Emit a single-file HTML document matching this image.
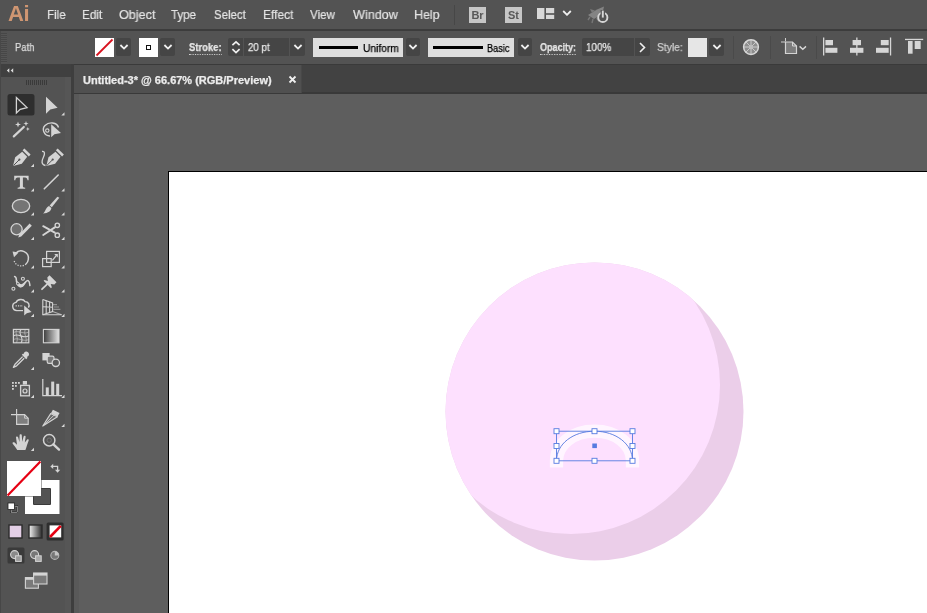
<!DOCTYPE html>
<html>
<head>
<meta charset="utf-8">
<style>
*{box-sizing:border-box;margin:0;padding:0}
html,body{width:927px;height:613px;overflow:hidden;background:#5e5e5e;font-family:"Liberation Sans",sans-serif;}
#app{position:relative;width:927px;height:613px;overflow:hidden;background:#5e5e5e}
.abs{position:absolute}
#menubar{left:0;top:0;width:927px;height:29px;background:#535353}
#menuline{left:0;top:29px;width:927px;height:2px;background:#3c3c3c}
#ctrl{left:0;top:31px;width:927px;height:33px;background:#535353}
#tabbar{left:72px;top:64px;width:855px;height:30px;background:#424242;border-top:1px solid #3a3a3a;border-bottom:2px solid #393939}
#tab{left:74px;top:65px;width:228px;height:28px;background:#505050;border-right:1px solid #484848}
#tools{left:0;top:64px;width:72px;height:549px;background:#535353}
#toolhead{left:0;top:64px;width:72px;height:13px;background:#404040}
#toolborder{left:71px;top:64px;width:3px;height:549px;background:#3e3e3e}
#strip{left:74px;top:94px;width:5px;height:519px;background:#595959}
#strip2{left:65px;top:77px;width:6px;height:536px;background:#565656}

.mi{-webkit-text-stroke:0.2px currentColor;will-change:transform;position:absolute;top:7px;font-size:13px;line-height:16px;color:#e4e4e4;white-space:nowrap;transform-origin:0 0}
.ct{-webkit-text-stroke:0.25px currentColor;will-change:transform;position:absolute;font-size:11px;line-height:14px;color:#dcdcdc;white-space:nowrap;transform-origin:0 0}
.dd{position:absolute;top:38px;height:18px;background:#454545;border-radius:2px}
.dd svg{position:absolute;left:50%;top:50%;margin-left:-5px;margin-top:-3px}
.fld{position:absolute;top:38px;height:18px;background:#454545}
.lt{position:absolute;top:38px;height:19px;background:#dedede}
.ul{border-bottom:1px dotted #cfcfcf}
.appbtn{will-change:transform;position:absolute;top:7px;width:17px;height:16px;background:#c6c6c6;color:#585858;font-size:11px;font-weight:bold;line-height:16px;text-align:center}
#artboard{left:168px;top:171px;width:760px;height:443px;background:#fff;border:1px solid #000}
</style>
</head>
<body>
<div id="app">
  <!-- canvas -->
  <div class="abs" id="artboard"></div>
  <svg class="abs" style="left:0;top:0" width="927" height="613" viewBox="0 0 927 613">
    <defs><clipPath id="bigc"><circle cx="594.5" cy="411.5" r="149"/></clipPath></defs>
    <circle cx="594.5" cy="411.5" r="149" fill="#ebcee9"/>
    <circle cx="571" cy="385" r="149" fill="#fde0fe" clip-path="url(#bigc)"/>

    <path d="M556.5 460.8 C556.5 444 573 431.2 594.5 431.2 C616 431.2 632.5 444 632.5 460.8" fill="none" stroke="#fff6ff" stroke-width="13.3" stroke-linecap="square" opacity="0.92"/>
    <path d="M556.5 460.8 C556.5 444 573 431.2 594.5 431.2 C616 431.2 632.5 444 632.5 460.8" fill="none" stroke="#567be0" stroke-width="0.9"/>
    <rect x="556.5" y="431.2" width="76" height="29.6" fill="none" stroke="#567be0" stroke-width="0.9"/>
    <g fill="#fff" stroke="#567be0" stroke-width="0.9">
      <rect x="554" y="428.7" width="5" height="5"/><rect x="592" y="428.7" width="5" height="5"/><rect x="630" y="428.7" width="5" height="5"/>
      <rect x="554" y="443.5" width="5" height="5"/><rect x="630" y="443.5" width="5" height="5"/>
      <rect x="554" y="458.3" width="5" height="5"/><rect x="592" y="458.3" width="5" height="5"/><rect x="630" y="458.3" width="5" height="5"/>
    </g>
    <rect x="592.3" y="443.5" width="4.6" height="4.6" fill="#567be0"/>
  </svg>

  <!-- menubar -->

  <div class="abs" id="menubar">
    <div class="abs" id="ailogo" style="will-change:transform;left:8px;top:1px;font-size:22px;line-height:26px;font-weight:bold;color:#cf9672;letter-spacing:-0.5px">Ai</div>
    <span class="mi" id="m1" style="transform:scaleX(0.893);left:47px">File</span>
    <span class="mi" id="m2" style="transform:scaleX(0.901);left:82px">Edit</span>
    <span class="mi" id="m3" style="transform:scaleX(0.968);left:119px">Object</span>
    <span class="mi" id="m4" style="transform:scaleX(0.885);left:171px">Type</span>
    <span class="mi" id="m5" style="transform:scaleX(0.881);left:214px">Select</span>
    <span class="mi" id="m6" style="transform:scaleX(0.919);left:263px">Effect</span>
    <span class="mi" id="m7" style="transform:scaleX(0.896);left:310px">View</span>
    <span class="mi" id="m8" style="transform:scaleX(0.971);left:353px">Window</span>
    <span class="mi" id="m9" style="transform:scaleX(0.957);left:414px">Help</span>
    <div class="abs" style="left:454px;top:5px;width:1px;height:20px;background:#474747"></div>
    <div class="appbtn" style="left:469px">Br</div>
    <div class="appbtn" style="left:505px">St</div>
    <svg class="abs" style="left:537px;top:8px" width="18" height="11" viewBox="0 0 18 11"><rect x="0" y="0" width="7.4" height="11" fill="#d8d8d8"/><rect x="9" y="0" width="8.2" height="5.2" fill="#d8d8d8"/><rect x="9" y="6.8" width="8.2" height="4.2" fill="#d8d8d8"/></svg>
    <svg class="abs" style="left:561.5px;top:10px" width="10" height="6" viewBox="0 0 10 6"><path d="M1.2 1 L5 4.8 L8.8 1" fill="none" stroke="#f0f0f0" stroke-width="1.8"/></svg>
    <svg class="abs" id="gpu" style="left:587px;top:4px" width="24" height="22" viewBox="0 0 24 22">
      <path d="M1 11 L10 5.5 L17 2.5 L16 7 L12 12 L7 15 Z" fill="#848484"/>
      <path d="M5 9 L3 5 L8 6.5 Z M9 14.5 L12 18.5 L13 12.5 Z" fill="#7a7a7a"/>
      <path d="M3 13 L1 16 M6 15 L5 19" stroke="#777" stroke-width="1.4"/>
      <circle cx="15.8" cy="13.4" r="4.6" fill="#535353" stroke="#d6d6d6" stroke-width="1.9"/>
      <rect x="13.6" y="6" width="4.4" height="6" fill="#535353"/>
      <path d="M15.8 6.6 V13.6" stroke="#d6d6d6" stroke-width="1.9"/>
    </svg>
  </div>
  <div class="abs" id="menuline"></div>

  <div class="abs" id="ctrl"></div>
  <div class="abs" id="ctrlitems" style="left:0;top:0;width:927px;height:64px">
    <div class="abs" style="left:1px;top:33px;width:6px;height:30px;background:repeating-linear-gradient(to bottom,#474747 0,#474747 1px,#555 1px,#555 2px)"></div><div class="abs" style="left:0;top:31px;width:1px;height:33px;background:#484848"></div>
    <span class="ct" id="c1" style="transform:scaleX(0.863);left:15px;top:40px">Path</span>
    <svg class="abs" style="left:95px;top:38px" width="19" height="19" viewBox="0 0 19 19"><rect width="19" height="19" fill="#fff"/><path d="M1.5 17.5 L17.5 1.5" stroke="#d8121e" stroke-width="1.8"/></svg>
    <div class="dd" style="left:116px;width:15px"><svg width="10" height="6" viewBox="0 0 10 6"><path d="M1.4 1 L5 4.6 L8.6 1" fill="none" stroke="#f0f0f0" stroke-width="1.8"/></svg></div>
    <svg class="abs" style="left:139px;top:38px" width="19" height="19" viewBox="0 0 19 19"><rect width="19" height="19" fill="#fff"/><rect x="7.5" y="7.5" width="4" height="4" fill="none" stroke="#111" stroke-width="1"/></svg>
    <div class="dd" style="left:160px;width:15px"><svg width="10" height="6" viewBox="0 0 10 6"><path d="M1.4 1 L5 4.6 L8.6 1" fill="none" stroke="#f0f0f0" stroke-width="1.8"/></svg></div>
    <span class="ct ul" id="c2" style="transform:scaleX(0.861);left:189px;top:40px;font-weight:bold;color:#e6e6e6">Stroke:</span>
    <div class="fld" style="left:228px;width:15px;border-radius:2px 0 0 2px">
      <svg class="abs" style="left:3px;top:2px" width="10" height="15" viewBox="0 0 10 15"><path d="M1.4 5.2 L5 1.8 L8.6 5.2 M1.4 9.2 L5 12.6 L8.6 9.2" fill="none" stroke="#f0f0f0" stroke-width="1.7"/></svg>
    </div>
    <div class="fld" style="left:244px;width:45px"></div>
    <span class="ct" id="c3" style="transform:scaleX(0.884);left:248px;top:40px;color:#eaeaea">20 pt</span>
    <div class="dd" style="left:290px;width:15px;border-radius:0 2px 2px 0"><svg width="10" height="6" viewBox="0 0 10 6"><path d="M1.4 1 L5 4.6 L8.6 1" fill="none" stroke="#f0f0f0" stroke-width="1.8"/></svg></div>
    <div class="lt" style="left:313px;width:90px"><div class="abs" style="left:6px;top:8px;width:39px;height:3px;background:#000"></div></div>
    <span class="ct" id="c4" style="transform:scaleX(0.932);left:363px;top:41px;color:#000">Uniform</span>
    <div class="dd" style="left:406px;width:14px"><svg width="10" height="6" viewBox="0 0 10 6"><path d="M1.4 1 L5 4.6 L8.6 1" fill="none" stroke="#f0f0f0" stroke-width="1.8"/></svg></div>
    <div class="lt" style="left:428px;width:86px"><div class="abs" style="left:5px;top:8px;width:50px;height:3px;background:#000"></div></div>
    <span class="ct" id="c5" style="transform:scaleX(0.831);left:487px;top:41px;color:#000">Basic</span>
    <div class="dd" style="left:518px;width:14px"><svg width="10" height="6" viewBox="0 0 10 6"><path d="M1.4 1 L5 4.6 L8.6 1" fill="none" stroke="#f0f0f0" stroke-width="1.8"/></svg></div>
    <span class="ct ul" id="c6" style="transform:scaleX(0.820);left:540px;top:40px;font-weight:bold;color:#e6e6e6">Opacity:</span>
    <div class="fld" style="left:582px;width:52px;border-radius:2px 0 0 2px"></div>
    <span class="ct" id="c7" style="transform:scaleX(0.902);left:586px;top:40px;color:#eaeaea">100%</span>
    <div class="fld" style="left:635px;width:15px;border-radius:0 2px 2px 0"><svg class="abs" style="left:4px;top:4px" width="7" height="11" viewBox="0 0 7 11"><path d="M1 1 L5.5 5.5 L1 10" fill="none" stroke="#f0f0f0" stroke-width="1.6"/></svg></div>
    <span class="ct" id="c8" style="transform:scaleX(0.937);left:657px;top:40px;color:#d0d0d0">Style:</span>
    <div class="abs" style="left:688px;top:38px;width:19px;height:19px;background:#e6e6e6"></div>
    <div class="dd" style="left:709px;width:15px"><svg width="10" height="6" viewBox="0 0 10 6"><path d="M1.4 1 L5 4.6 L8.6 1" fill="none" stroke="#f0f0f0" stroke-width="1.8"/></svg></div>
    <div class="abs" style="left:733px;top:36px;width:1px;height:23px;background:#4a4a4a"></div>
    <svg class="abs" id="wheel" style="left:741px;top:37px" width="20" height="20" viewBox="0 0 20 20">
      <circle cx="10" cy="10.1" r="7.4" fill="#8e8e8e" stroke="#d8d8d8" stroke-width="1.5"/>
      <g stroke="#d0d0d0" stroke-width="0.9"><path d="M10 3 V17 M3 10 H17 M5 5 L15 15 M15 5 L5 15"/></g>
      <circle cx="10" cy="10.1" r="2.2" fill="#bdbdbd"/>
    </svg>
    <div class="abs" style="left:770px;top:36px;width:1px;height:23px;background:#4a4a4a"></div>
    <svg class="abs" id="docic" style="left:780px;top:37px" width="28" height="20" viewBox="0 0 28 20">
      <path d="M5.5 5 H12.5 L16.5 9 V16.5 H5.5 Z" fill="#7c7c7c" stroke="#d4d4d4" stroke-width="1.2"/>
      <path d="M12.5 5 V9 H16.5" fill="none" stroke="#d4d4d4" stroke-width="1"/>
      <path d="M1 5 H5 M5.5 1 V4.4" stroke="#d0d0d0" stroke-width="1"/>
      <path d="M19.6 9.4 L22.8 12.2 L26 9.4" fill="none" stroke="#d8d8d8" stroke-width="1.4"/>
    </svg>
    <div class="abs" style="left:816px;top:36px;width:1px;height:23px;background:#4a4a4a"></div>
    <svg class="abs" style="left:822px;top:37px" width="16" height="20" viewBox="0 0 16 20"><rect x="1" y="0.5" width="1.3" height="18" fill="#d6d6d6"/><rect x="3.4" y="3" width="7.6" height="5.2" fill="#d6d6d6"/><rect x="3.4" y="10.8" width="12" height="5" fill="#d6d6d6"/></svg>
    <svg class="abs" style="left:849px;top:37px" width="16" height="20" viewBox="0 0 16 20"><rect x="7.2" y="0.5" width="1.3" height="18" fill="#d6d6d6"/><rect x="3.6" y="3" width="8.4" height="5.2" fill="#d6d6d6"/><rect x="1" y="10.8" width="13.4" height="5" fill="#d6d6d6"/></svg>
    <svg class="abs" style="left:876px;top:37px" width="16" height="20" viewBox="0 0 16 20"><rect x="13.9" y="0.5" width="1.3" height="18" fill="#d6d6d6"/><rect x="4.8" y="3" width="7.9" height="5.2" fill="#d6d6d6"/><rect x="0" y="10.8" width="12.7" height="5" fill="#d6d6d6"/></svg>
    <svg class="abs" style="left:904px;top:37px" width="20" height="20" viewBox="0 0 20 20"><rect x="1" y="1.8" width="18.2" height="1.3" fill="#d6d6d6"/><rect x="4" y="4" width="4.6" height="12.7" fill="#d6d6d6"/><rect x="10.7" y="4" width="6" height="8" fill="#d6d6d6"/></svg>
  </div>
  <div class="abs" id="tabbar"></div>

  <div class="abs" id="tab"></div>
  <span class="ct" id="tabtxt" style="left:83px;top:73px;font-weight:bold;color:#ececec">Untitled-3* @ 66.67% (RGB/Preview)</span>
  <svg class="abs" style="left:288px;top:75px" width="9" height="9" viewBox="0 0 9 9"><path d="M1.5 1.5 L7.5 7.5 M7.5 1.5 L1.5 7.5" stroke="#f0f0f0" stroke-width="1.8"/></svg>
  <div class="abs" id="tools"></div>
  <div class="abs" id="toolhead"></div>
  <div class="abs" id="toolborder"></div>
  <div class="abs" id="strip"></div>
  <div class="abs" id="strip2"></div>
  <div class="abs" style="left:0;top:64px;width:1px;height:549px;background:#474747"></div>

  <svg class="abs" id="toolsvg" style="left:0;top:0" width="75" height="613" viewBox="0 0 75 613">
    <!-- grip -->
    <g fill="#3a3a3a"><rect x="26" y="80" width="1" height="5"/><rect x="28" y="80" width="1" height="5"/><rect x="30" y="80" width="1" height="5"/><rect x="32" y="80" width="1" height="5"/><rect x="34" y="80" width="1" height="5"/><rect x="36" y="80" width="1" height="5"/><rect x="38" y="80" width="1" height="5"/><rect x="40" y="80" width="1" height="5"/><rect x="42" y="80" width="1" height="5"/><rect x="44" y="80" width="1" height="5"/><rect x="46" y="80" width="1" height="5"/></g>
    <!-- collapse arrows -->
    <path d="M9.3 68.2 L6.8 70.5 L9.3 72.8 Z M13.2 68.2 L10.7 70.5 L13.2 72.8 Z" fill="#dcdcdc"/>
    <!-- selected bg -->
    <rect x="7.5" y="94" width="27" height="21.5" rx="2.5" fill="#2e2e2e"/>
    <!-- selection tool -->
    <path d="M16.4 97.6 V113 L20.2 109.3 L27 107.6 Z" fill="#2e2e2e" stroke="#d4d4d4" stroke-width="1.3" stroke-linejoin="miter"/>
    <!-- direct selection -->
    <path d="M46 96.8 V113.8 L50.3 109.6 L57.6 107.8 Z" fill="#d4d4d4"/>
    <!-- magic wand -->
    <path d="M13.8 136.4 L23.8 127" stroke="#d4d4d4" stroke-width="2.2" stroke-linecap="round"/>
    <path d="M18 121.5 L18.8 123.7 L21 124.5 L18.8 125.3 L18 127.5 L17.2 125.3 L15 124.5 L17.2 123.7 Z" fill="#d4d4d4"/>
    <path d="M26 121 L26.7 122.9 L28.6 123.6 L26.7 124.3 L26 126.2 L25.3 124.3 L23.4 123.6 L25.3 122.9 Z" fill="#d4d4d4"/>
    <path d="M27.8 127 L28.4 128.4 L29.8 129 L28.4 129.6 L27.8 131 L27.2 129.6 L25.8 129 L27.2 128.4 Z" fill="#d4d4d4"/>
    <!-- lasso -->
    <path d="M50 136 C44 136 41.5 129 45 125.5 C49 121.5 57 122 58.5 127.5" fill="none" stroke="#d4d4d4" stroke-width="1.4"/>
    <circle cx="47.3" cy="130.6" r="1.7" fill="none" stroke="#d4d4d4" stroke-width="1.1"/>
    <path d="M51.2 124.3 V137.3 L54.4 134.2 L61 133 Z" fill="#d4d4d4"/>
    <!-- pen -->
    <g id="pen">
      <path d="M13 166 L15.2 157.2 L22.2 151.8 L27.2 156.8 L21.8 163.8 Z" fill="#d4d4d4"/>
      <path d="M22.6 150.2 L24.4 148.4 L30.6 154.6 L28.8 156.4 Z" fill="#d4d4d4"/>
      <path d="M13.4 165.6 L19 160" stroke="#535353" stroke-width="1"/>
      <circle cx="19.4" cy="159.6" r="1.1" fill="#535353"/>
    </g>
    <!-- curvature -->
    <g transform="translate(33.3,0)">
      <path d="M13 166 L15.2 157.2 L22.2 151.8 L27.2 156.8 L21.8 163.8 Z" fill="#d4d4d4"/>
      <path d="M22.6 150.2 L24.4 148.4 L30.6 154.6 L28.8 156.4 Z" fill="#d4d4d4"/>
      <path d="M13.4 165.6 L19 160" stroke="#535353" stroke-width="1"/>
      <circle cx="19.4" cy="159.6" r="1.1" fill="#535353"/>
    </g>
    <path d="M42 151.5 C45 151 45 154 43.5 157 C41.5 161 41 164.5 45.5 165.5" fill="none" stroke="#d4d4d4" stroke-width="1.3"/>
    <!-- type -->
    <path d="M14.2 175.8 H28.6 V180.2 H27.5 C27.3 178.4 26.6 177.5 25 177.5 H22.9 V186 C22.9 187.2 23.4 187.6 25.2 187.7 V188.7 H17.6 V187.7 C19.4 187.6 19.9 187.2 19.9 186 V177.5 H17.8 C16.2 177.5 15.5 178.4 15.3 180.2 H14.2 Z" fill="#d4d4d4"/>
    <!-- line -->
    <path d="M44.3 188.8 L58.2 175" stroke="#d4d4d4" stroke-width="1.6" stroke-linecap="round"/>
    <!-- ellipse -->
    <ellipse cx="21" cy="206" rx="8.7" ry="6.6" fill="#757575" stroke="#d4d4d4" stroke-width="1.3"/>
    <!-- paintbrush -->
    <path d="M59.3 197.8 L51.8 207.2 L49.6 205.4 L57.4 196.8 Z" fill="#d4d4d4"/>
    <path d="M49 206 L51.4 208 C51 211 48.5 213 43 213.6 C45.8 211.6 45.2 208 49 206 Z" fill="#d4d4d4"/>
    <!-- shaper -->
    <circle cx="16.6" cy="229.3" r="5.6" fill="#6e6e6e" stroke="#d4d4d4" stroke-width="1.3"/>
    <path d="M29.6 223.6 L31.8 225.8 L21.2 236.4 L18.2 237.6 L19.2 234.4 Z" fill="#d4d4d4"/>
    <!-- scissors -->
    <path d="M43.2 226.2 L54.8 232.6 M43.2 235 L54.8 227.4" stroke="#d4d4d4" stroke-width="1.9" stroke-linecap="round"/>
    <circle cx="57.3" cy="225.3" r="2.2" fill="none" stroke="#d4d4d4" stroke-width="1.3"/>
    <circle cx="57.3" cy="235.2" r="2.2" fill="none" stroke="#d4d4d4" stroke-width="1.3"/>
    <!-- rotate -->
    <path d="M15.5 253.6 A7.3 7.3 0 0 1 28.3 259.5 A7.3 7.3 0 0 1 26 264" fill="none" stroke="#d4d4d4" stroke-width="1.5"/>
    <path d="M26 264 A7.3 7.3 0 0 1 14 260.5" fill="none" stroke="#d4d4d4" stroke-width="1.3" stroke-dasharray="1.2 1.4"/>
    <path d="M12.6 251.4 L18.6 252.4 L14 257.2 Z" fill="#d4d4d4"/>
    <!-- scale -->
    <rect x="46.6" y="251.4" width="12.8" height="11" fill="none" stroke="#d4d4d4" stroke-width="1.2"/>
    <rect x="42.6" y="258.6" width="8.6" height="8" fill="none" stroke="#d4d4d4" stroke-width="1.2"/>
    <path d="M52.4 260.4 L56.4 255.4" stroke="#d4d4d4" stroke-width="1.3"/>
    <path d="M54.2 254 H57.8 V257.6 Z" fill="#d4d4d4"/>
    <!-- width -->
    <path d="M14.6 276.6 C17.6 277.2 15.4 281.4 17.4 284 C19.4 286.6 21.2 287.6 23.2 285.4 C25.2 283 26.4 279.8 28.2 280.6 C29.8 281.4 29.6 283.6 29.9 285.6" fill="none" stroke="#d4d4d4" stroke-width="1.5" stroke-linecap="round"/>
    <path d="M16 279 C15.4 282 16.4 284.6 18.4 286.6 C20.6 288.4 22.6 287.2 24 285 C25 283.4 25.6 281.6 26.8 280.6 C24.6 281.2 23.6 284 21.4 284.2 C19 284.2 17.6 281.6 16 279 Z" fill="#d4d4d4"/>
    <circle cx="13.4" cy="288.8" r="1.5" fill="#535353" stroke="#d4d4d4" stroke-width="1.1"/>
    <circle cx="22.9" cy="278.8" r="1.5" fill="#535353" stroke="#d4d4d4" stroke-width="1.1"/>
    <circle cx="17.8" cy="283.6" r="1.3" fill="#6a6a6a" stroke="#d4d4d4" stroke-width="0.9"/>
    <!-- puppet pin -->
    <path d="M44.8 279 L45.65 278.15 L49.1 279.3 L48.5 275.7 L50.7 273.5 L57.7 280.5 L55.5 282.7 L51.9 282.1 L53.05 285.55 L52.2 286.4 Z" fill="#d4d4d4" transform="translate(-1.2,1.8)"/>
    <path d="M42 289.2 L47 284.4" stroke="#d4d4d4" stroke-width="1.8" stroke-linecap="round"/>
    <!-- shape builder -->
    <path d="M17 310.6 C12 310.6 11 303.6 16 302.4 C17.5 298.8 23.5 298.6 25 301.6 C28.6 301.6 30 305 28.4 307.6" fill="none" stroke="#d4d4d4" stroke-width="1.4"/>
    <path d="M15.6 305.8 H23" stroke="#d4d4d4" stroke-width="1.3" stroke-dasharray="1.2 1.2"/>
    <path d="M24.2 305.6 V315.6 L26.8 313.2 L31.6 312 Z" fill="#d4d4d4"/>
    <path d="M17 310.6 H23" stroke="#d4d4d4" stroke-width="1.2"/>
    <!-- perspective grid -->
    <g fill="none" stroke="#d4d4d4" stroke-width="1.1">
      <path d="M42.8 299.4 V314.8 H61.6"/>
      <path d="M42.8 299.4 L52.6 303 V311.6 L42.8 314.8"/>
      <path d="M46.2 300.6 V313.8 M49.6 301.8 V312.6 M42.8 306.8 L52.6 307.2"/>
      <path d="M52.6 311.6 L61.6 314.8" opacity="0.7"/>
      <path d="M54 307 H59 M53.4 309.4 H60.4 M53 304.6 H57" opacity="0.5"/>
    </g>
    <!-- mesh -->
    <g fill="none" stroke="#d4d4d4">
      <rect x="13.4" y="329.4" width="15.4" height="13.4" stroke-width="1.2" fill="#626262"/>
      <path d="M13.4 336 C18 332 24 340 28.8 335.6 M21 329.4 C17 334 25 338 21 342.8" stroke-width="1.1"/>
      <path d="M13.4 339.6 C18 337 23 342 28.8 339.6 M16.6 329.4 C14.6 334 19 338 16.4 342.8 M25.4 329.4 C23 334 28 338 25.6 342.8 M13.4 332.6 C18 329.6 24 335 28.8 332" stroke-width="0.7" opacity="0.8"/>
    </g>
    <!-- gradient -->
    <defs><linearGradient id="gt" x1="0" x2="1" y1="0" y2="0"><stop offset="0" stop-color="#3c3c3c"/><stop offset="1" stop-color="#e4e4e4"/></linearGradient></defs>
    <rect x="43.4" y="329.4" width="15.6" height="13.4" fill="url(#gt)" stroke="#d4d4d4" stroke-width="1.1"/>
    <!-- eyedropper -->
    <path d="M24.2 352.4 C25.6 350.6 28.8 351.4 29 354 C29.2 355.6 28 356.6 26.8 357 L27.6 357.8 L26.2 359.2 L21.8 354.8 L23.2 353.4 L24 354.2 C23.8 353.6 23.8 353 24.2 352.4 Z" fill="#d4d4d4"/>
    <path d="M22.6 356.6 L15 364.2 L13.4 367.4 L16.6 365.8 L24.2 358.2" fill="none" stroke="#d4d4d4" stroke-width="1.3" stroke-linejoin="round"/>
    <!-- blend -->
    <rect x="42.4" y="353" width="7.2" height="7.4" fill="#d4d4d4"/>
    <rect x="47.2" y="356.2" width="6.8" height="7.2" rx="1.6" fill="#777" stroke="#d4d4d4" stroke-width="1.2"/>
    <circle cx="55.8" cy="362.8" r="3.7" fill="#5a5a5a" stroke="#d4d4d4" stroke-width="1.3"/>
    <!-- symbol sprayer -->
    <g fill="#d4d4d4">
      <rect x="12" y="382" width="1.8" height="1.8"/><rect x="15" y="382" width="1.8" height="1.8"/><rect x="18" y="382" width="1.8" height="1.8"/>
      <rect x="12" y="385" width="1.8" height="1.8"/><rect x="15" y="385" width="1.8" height="1.8"/>
      <rect x="12" y="388" width="1.8" height="1.8"/>
      <rect x="22.8" y="381" width="4.2" height="3.6"/>
    </g>
    <rect x="20.6" y="385.4" width="8.8" height="10.4" fill="#5c5c5c" stroke="#d4d4d4" stroke-width="1.3"/>
    <circle cx="25" cy="391" r="2" fill="none" stroke="#d4d4d4" stroke-width="1.2"/>
    <!-- column graph -->
    <path d="M42.8 379 V395.6 H62" fill="none" stroke="#d4d4d4" stroke-width="1.2"/>
    <rect x="45.8" y="387.4" width="3" height="7.6" fill="#d4d4d4"/>
    <rect x="51.2" y="381.6" width="3" height="13.4" fill="#d4d4d4"/>
    <rect x="56.2" y="383.8" width="3" height="11.2" fill="#d4d4d4"/>
    <!-- artboard -->
    <path d="M16.6 414.6 H24.6 L28.2 418.2 V424.4 H16.6 Z" fill="#7e7e7e" stroke="#d4d4d4" stroke-width="1.1"/>
    <path d="M24.6 414.6 V418.2 H28.2" fill="none" stroke="#d4d4d4" stroke-width="0.9"/>
    <path d="M16.6 409 V414 M11 414.6 H16" stroke="#d4d4d4" stroke-width="1.1"/>
    <!-- slice -->
    <path d="M52.9 409.8 L59.6 412.9 L57.6 416.4 L50.9 413.3 Z" fill="#d4d4d4"/>
    <path d="M50.7 413.6 L57.4 416.7 L42.8 426 Z" fill="#6a6a6a" stroke="#d4d4d4" stroke-width="1.1" stroke-linejoin="round"/>
    <path d="M54 415.2 L42.8 426" stroke="#d4d4d4" stroke-width="0.9"/>
    <!-- hand -->
    <path d="M17.2 450 C16 447.6 13.8 445.4 12.6 443.6 C12.2 442.4 13.6 441.8 14.6 442.6 L17 444.8 L16 437.6 C15.8 436.2 17.8 436 18.2 437.4 L19.4 442 L19.6 435.4 C19.6 434 21.8 434 21.8 435.4 L22.2 441.8 L23.6 436.6 C24 435.2 25.8 435.6 25.6 437 L24.8 442.6 L27 439.8 C27.8 438.8 29.2 439.6 28.6 440.8 C27.4 443.6 26.6 447 25.4 450 Z" fill="#d4d4d4"/>

    <!-- stroke box -->
    <path d="M25 480 H59.5 V514 H25 Z M34 489 V504 H50 V489 Z" fill="#fff" fill-rule="evenodd"/>
    <path d="M33.5 488.5 H50.5 V504.5 H33.5 Z" fill="none" stroke="#3a3a3a" stroke-width="1"/>
    <!-- fill box -->
    <rect x="6.5" y="460.5" width="35" height="36" fill="#535353"/>
    <rect x="7" y="461" width="34" height="35" fill="#fff"/>
    <path d="M7.6 495.4 L40.4 461.6" stroke="#e60012" stroke-width="2.2"/>
    <!-- swap arrows -->
    <path d="M53 466.4 H57.6 V470.6" fill="none" stroke="#d4d4d4" stroke-width="1.3"/>
    <path d="M53.2 463.8 V469 L50.4 466.4 Z" fill="#d4d4d4"/>
    <path d="M55 469.8 H60.2 L57.6 472.8 Z" fill="#d4d4d4"/>
    <!-- default fill/stroke -->
    <rect x="11.2" y="506.2" width="6" height="6" fill="none" stroke="#111" stroke-width="1.6"/>
    <rect x="11.2" y="506.2" width="6" height="6" fill="none" stroke="#eee" stroke-width="0.6"/>
    <rect x="8" y="503" width="6.4" height="6.4" fill="#fff" stroke="#222" stroke-width="0.8"/>
    <!-- color / gradient / none -->
    <rect x="9" y="525" width="13" height="13" fill="#e3cfe6" stroke="#2c2c2c" stroke-width="1.4"/>
    <defs><linearGradient id="gb" x1="0" x2="1" y1="0" y2="0"><stop offset="0" stop-color="#f4f4f4"/><stop offset="1" stop-color="#2a2a2a"/></linearGradient></defs>
    <rect x="29" y="525" width="13" height="13" fill="url(#gb)" stroke="#2c2c2c" stroke-width="1.4"/>
    <rect x="46.6" y="522.4" width="17" height="18" rx="1.5" fill="#2e2e2e"/>
    <rect x="49.6" y="525.4" width="11.6" height="12" fill="#fff"/>
    <path d="M50 537 L60.8 525.8" stroke="#e60012" stroke-width="2.6"/>
    <!-- draw modes -->
    <rect x="7.5" y="547.6" width="17" height="16" rx="1.5" fill="#3a3a3a"/>
    <g>
      <circle cx="14.6" cy="554.6" r="4" fill="#8a8a8a" stroke="#d4d4d4" stroke-width="1.1"/>
      <rect x="15.6" y="555.8" width="5.6" height="5.6" fill="#9a9a9a" stroke="#d4d4d4" stroke-width="1"/>
      <circle cx="34.6" cy="554.6" r="4" fill="#777" stroke="#d4d4d4" stroke-width="1.1"/>
      <rect x="35.6" y="555.8" width="5.6" height="5.6" fill="#aaa" stroke="#d4d4d4" stroke-width="1"/>
      <circle cx="54.8" cy="555.4" r="4" fill="#777" stroke="#b4b4b4" stroke-width="1.1"/>
      <path d="M54.8 551.4 A4 4 0 0 1 58.8 555.4 H54.8 Z" fill="#c4c4c4"/>
    </g>
    <!-- screen mode -->
    <rect x="25.4" y="577.6" width="13" height="10.6" fill="#7a7a7a" stroke="#d4d4d4" stroke-width="1.1"/>
    <rect x="33.6" y="573" width="13.4" height="11" fill="#7a7a7a" stroke="#d4d4d4" stroke-width="1.1"/>
    <rect x="33.6" y="573" width="13.4" height="2.6" fill="#d4d4d4"/>
    <rect x="25.4" y="577.6" width="8" height="2.2" fill="#d4d4d4"/>
    <!-- zoom -->
    <circle cx="49.2" cy="440.2" r="5.7" fill="none" stroke="#d4d4d4" stroke-width="1.5"/>
    <circle cx="49.2" cy="440.2" r="2.2" fill="none" stroke="#777" stroke-width="0.9"/>
    <path d="M53.4 444.4 L59 449.6" stroke="#d4d4d4" stroke-width="2.4" stroke-linecap="round"/>
    <path d="M64.5 112.3 V115.5 H61.3 Z" fill="#d8d8d8"/><path d="M34 163.8 V167 H30.8 Z" fill="#d8d8d8"/><path d="M34 188.3 V191.5 H30.8 Z" fill="#d8d8d8"/><path d="M64.5 188.3 V191.5 H61.3 Z" fill="#d8d8d8"/><path d="M34 212.3 V215.5 H30.8 Z" fill="#d8d8d8"/><path d="M64.5 212.3 V215.5 H61.3 Z" fill="#d8d8d8"/><path d="M34 236.8 V240 H30.8 Z" fill="#d8d8d8"/><path d="M64.5 236.8 V240 H61.3 Z" fill="#d8d8d8"/><path d="M34 265.3 V268.5 H30.8 Z" fill="#d8d8d8"/><path d="M64.5 265.3 V268.5 H61.3 Z" fill="#d8d8d8"/><path d="M34 289.3 V292.5 H30.8 Z" fill="#d8d8d8"/><path d="M64.5 289.3 V292.5 H61.3 Z" fill="#d8d8d8"/><path d="M34 313.8 V317 H30.8 Z" fill="#d8d8d8"/><path d="M64.5 313.8 V317 H61.3 Z" fill="#d8d8d8"/><path d="M34 366.8 V370 H30.8 Z" fill="#d8d8d8"/><path d="M34 394.8 V398 H30.8 Z" fill="#d8d8d8"/><path d="M64.5 394.8 V398 H61.3 Z" fill="#d8d8d8"/><path d="M64.5 423.8 V427 H61.3 Z" fill="#d8d8d8"/><path d="M34 447.8 V451 H30.8 Z" fill="#d8d8d8"/>
  </svg>
</div>
</body>
</html>
